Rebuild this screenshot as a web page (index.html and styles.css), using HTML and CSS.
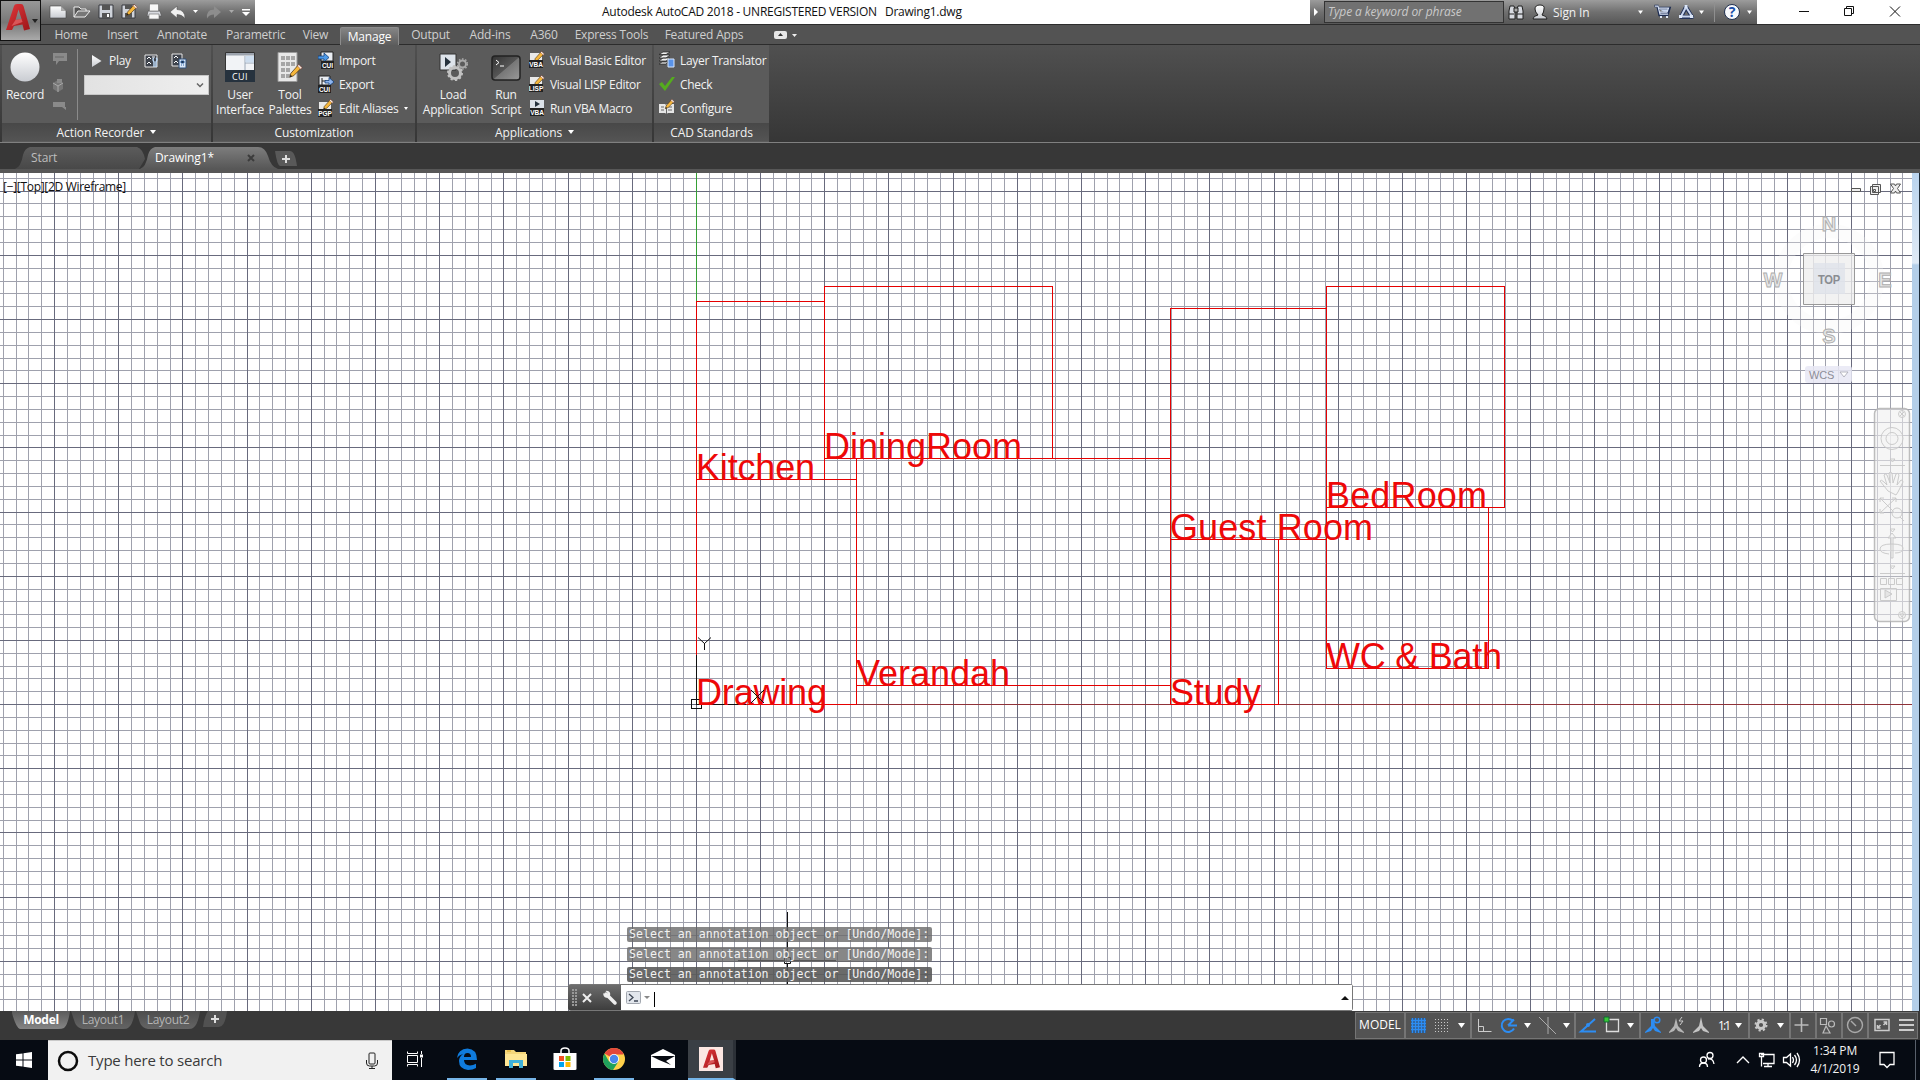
FILE: index.html
```html
<!DOCTYPE html>
<html lang="en">
<head>
<meta charset="utf-8">
<title>Autodesk AutoCAD 2018</title>
<link rel="stylesheet" href="styles.css">
</head>
<body>
<svg class="defs" width="0" height="0">
  <defs>
    <linearGradient id="metal" x1="0" y1="0" x2="0" y2="1"><stop offset="0" stop-color="#fff"/><stop offset="1" stop-color="#c9ccd2"/></linearGradient>
    <linearGradient id="redA" x1="0" y1="0" x2="1" y2="1"><stop offset="0" stop-color="#e2383c"/><stop offset="1" stop-color="#9c1518"/></linearGradient>
    <linearGradient id="screen" x1="0" y1="0" x2="1" y2="1"><stop offset="0" stop-color="#333"/><stop offset=".5" stop-color="#555"/><stop offset=".52" stop-color="#777"/><stop offset="1" stop-color="#999"/></linearGradient>
    <symbol id="logo" viewBox="0 0 24 27"><path fill="url(#redA)" d="M0 26 8 2q.5-2 3-2h4q2 0 2.500 2L24 25l-6 1.500-1.500-6L8 22l-2 4zM9.500 16l6-1-3-9.500z"/><path fill="#f0787a" d="m9.500 16 6-1 1 3-11 4z" opacity=".6"/></symbol>
    <symbol id="pencil" viewBox="0 0 16 16"><path d="m2 14 1-4L11 1l3.500 3L6 12.500z" fill="#f6b73c" stroke="#4a3210" stroke-width=".8"/><path d="m10 2 1.500-1.500L15 4l-1.500 1.500z" fill="#f4efe4" stroke="#8a2c2c" stroke-width=".5"/><path d="m2 14 .7-2.500L4.500 13z" fill="#222"/></symbol>
  </defs>
</svg>

<header class="titlebar">
  <div class="quick">
    <svg width="214" height="24" viewBox="41 0 214 24">
      <path d="M50 6h11l5 5v7H50z" fill="url(#metal)" stroke="#444" stroke-width=".6"/><path d="M61 6v5h5z" fill="#aaa"/>
      <path d="M74 17V7h5l2 2h5v2" fill="#555" stroke="#eee"/><path d="m74 17 4-6h12l-5 6z" fill="#777" stroke="#eee"/>
      <path d="M99 5h14v13H99z" fill="#cfd3da" stroke="#36393f"/><path d="M102 5h8v5h-8zm0 8h8v5h-8z" fill="#555"/><path d="M107 14h2v3h-2z" fill="#fff"/>
      <path d="M122 5h13v13h-13z" fill="#cfd3da" stroke="#36393f"/><path d="M125 5h7v4h-7zm0 8h7v5h-7z" fill="#555"/><use href="#pencil" x="125" y="4" width="13" height="13"/>
      <path d="M148 11h12l1.500 5H147z" fill="#d9dbe0" stroke="#555" stroke-width=".7"/><path d="M149.500 4h9v7h-9zM149 14h10v5h-10z" fill="#f7f7f7" stroke="#777" stroke-width=".7"/>
      <path d="m170 12 7-6v3.500q8 0 8 9-3-4-8-4V18z" fill="#f1f1f1" stroke="#555" stroke-width=".6"/><path d="M193 10h5l-2.500 3z" fill="#fff"/>
      <path d="m221 12-7-6v3.500q-8 0-7 9 2-4 7-4V18z" fill="#8d8d8d"/><path d="M229 10h5l-2.500 3z" fill="#aaa"/>
      <path d="M242 9h8v1.500h-8zm0 3h8l-4 4z" fill="#fff"/>
    </svg>
  </div>
  <div class="caption"><span class="cap-a">Autodesk AutoCAD 2018 - UNREGISTERED VERSION</span><span>Drawing1.dwg</span></div>
  <div class="info">
    <i class="tri-right"></i>
    <span class="keyword">Type a keyword or phrase</span>
    <svg width="46" height="24" viewBox="1504 0 46 24">
      <path d="M1510 6h4l1 4v9h-6v-8zM1518 6h4l1 5v8h-6v-9z" fill="#d7dae0" stroke="#222"/><path d="M1514 8h4v4h-4zM1509 14h5m3 0h6" stroke="#222" fill="#aaa"/>
      <path d="M1533 19q0-3 5-4-3-3-3-6 0-4 5-4t4 4q0 3-2 6 5 1 5 4z" fill="url(#metal)" stroke="#222"/>
    </svg>
    <span class="signin">Sign In</span>
    <svg width="124" height="24" viewBox="1633 0 124 24">
      <path d="M1638 10.500h5l-2.500 3.500z" fill="#fff"/>
      <path d="M1654.500 6h3l2 9h9m-10-7h11l-1.500 5h-8" fill="#c8d6ee" stroke="#1e2d52" stroke-width="2.500"/><path d="M1655 6.200h3l2 8h8m-9-6h9.500l-1.500 4h-7" fill="none" stroke="#dbe5f7" stroke-width="1.200"/><path d="M1660 17h2m4 0h2" stroke="#dfe8f6" stroke-width="2.200"/>
      <path d="m1686 7-5 10h11z" fill="none" stroke="#233258" stroke-width="4" stroke-linejoin="round"/><path d="m1686 7-5 9.500h11z" fill="none" stroke="#c9d6ef" stroke-width="2"/><path d="M1679 15h3v3h-3zm11 0h3v3h-3zM1684.500 5h3v3h-3z" fill="#dde7f8"/>
      <path d="M1699 10.500h5l-2.500 3.500zM1747 10.500h5l-2.500 3.500z" fill="#fff"/><path d="M1714.500 2v20" stroke="#8f8f8f"/>
      <circle cx="1732" cy="12" r="7.500" fill="#f7f9fd" stroke="#20304f"/><text x="1732" y="17" class="help" text-anchor="middle">?</text>
    </svg>
  </div>
  <svg class="winbtns" width="163" height="24" viewBox="1757 0 163 24"><path d="M1799 11.500h10M1844.500 8.500h7v7h-7zM1846.500 8V6.500h7v7h-2M1890 6.500l10 10m0-10-10 10" fill="none" stroke="#111"/></svg>
  <div class="appbtn"><svg width="24" height="27"><use href="#logo" width="24" height="27"/></svg><i class="tri"></i></div>
</header>

<nav class="tabs">
  <span>Home</span><span>Insert</span><span>Annotate</span><span>Parametric</span><span class="view">View</span><span class="on">Manage</span><span>Output</span><span>Add-ins</span><span>A360</span><span>Express Tools</span><span>Featured Apps</span>
  <svg width="30" height="20" viewBox="0 0 30 20"><rect x="3" y="6" width="13" height="8" rx="2" fill="#e6e6e6"/><path d="m7 11 2.500-3 2.500 3z" fill="#333"/><path d="M21 9h5l-2.500 3z" fill="#eee"/></svg>
</nav>

<section class="ribbon">
  <div class="panel recorder">
    <div class="body">
      <div class="big"><svg width="30" height="30"><circle cx="15" cy="15" r="14.500" fill="url(#metal)"/></svg><span>Record</span></div>
      <svg width="26" height="76" viewBox="48 46 26 76" fill="#8a8a8a"><path d="M53 54h14v8h-8l-3 4v-4h-3z"/><path d="M55 58h9" stroke="#666"/><path d="m53 84 5-3 5 3v6l-5 3-5-3z" fill="#777"/><path d="m53 84 5 3 5-3m-5 3v6" stroke="#aaa" fill="none"/><path d="M57 80h5v4h-5z"/><path d="M53 103h12v5H53zm9 5h4v3z"/></svg>
      <i class="vsep"></i>
      <div class="playbox">
        <div class="row"><svg width="32" height="24"><path d="m8 6 9.500 6L8 18z" fill="url(#metal)"/></svg><span class="play">Play</span>
          <svg width="60" height="24" viewBox="139 49 60 24"><path d="M146 55h12v12h-12z" fill="#3e434c" stroke="#e6e6e6"/><path d="m148 59 2-2 2 2m-4 5 2-2 2 2m1-7h3" stroke="#fff" fill="none"/><path d="M155 67v-5q-2-3 0-4m2 9v-5q2-3 0-4" stroke="#bcd8f5" stroke-width="1.500" fill="none"/><path d="M173 54h10v12h-10z" fill="#3e434c" stroke="#e6e6e6"/><path d="m175 58 2-2 2 2m-4 5 2-2 2 2" stroke="#fff" fill="none"/><path d="M180 59h7v9h-7z" fill="#dbe9f8" stroke="#31517b"/><path d="M182 61h3v2h-3zm0 4h1m1 0h1" stroke="#3566a5"/></svg></div>
        <div class="combo"><svg width="12" height="8"><path d="m2 1.500 3 3 3-3" stroke="#666" stroke-width="1.500" fill="none"/></svg></div>
      </div>
    </div>
    <footer>Action Recorder <i class="tri"></i></footer>
  </div>
  <div class="panel custom">
    <div class="body">
      <div class="big w52"><svg width="30" height="30"><path d="M.5.500h29v18H.5z" fill="#f1f3f6" stroke="#333"/><path d="M1 1h28v2.500H1z" fill="#9ba2ac"/><path d="M20 4v14m0-7h9" stroke="#9aa6b5"/><path d="M20.500 4h8.500v6.500h-8.500z" fill="#cdddee"/><path d="M0 18h30v12H0z" fill="#26323e"/><text x="15" y="28" class="cui" text-anchor="middle">CUI</text></svg><span>User<br>Interface</span></div>
      <div class="big w46"><svg width="26" height="30"><path d="M1 .5h19v29H1z" fill="#e8e8e8" stroke="#999"/><path d="M4 4h4v4H4zm5 0h4v4H9zm5 0h4v4h-4zM4 10h4v4H4zm5 0h4v4H9zm5 0h4v4h-4zM4 16h4v4H4zm5 0h4v4H9zM4 22h4v4H4zm5 0h4v4H9z" fill="#a6a6a6"/><use href="#pencil" x="11" y="11" width="15" height="17"/></svg><span>Tool<br>Palettes</span></div>
      <ul>
        <li><svg width="16" height="18"><path d="M3 1h12v9H3z" fill="#e9edf2" stroke="#222"/><path d="M0 5h6V2l5 4.500L6 11V8H0z" fill="#4d9ae8" stroke="#123c75" stroke-width=".8"/><path d="M3 10h13v8H3z" fill="#222"/><text x="9.500" y="17" class="tiny" text-anchor="middle">CUI</text></svg>Import</li>
        <li><svg width="16" height="18"><path d="M1 1h11v9H1z" fill="#e9edf2" stroke="#222"/><path d="M4 3v7m0-4h4" stroke="#222"/><path d="M7 5.500h4v-3L16 7l-5 4V8H7z" fill="#8fb6ef" stroke="#123c75" stroke-width=".8"/><path d="M0 10h13v8H0z" fill="#222"/><text x="6.500" y="17" class="tiny" text-anchor="middle">CUI</text></svg>Export</li>
        <li><svg width="16" height="18"><path d="M1 3h12v8H1z" fill="#e9e9e9"/><use href="#pencil" x="4" y="0" width="12" height="12"/><path d="M0 10h14v8H0z" fill="#222"/><text x="7" y="17" class="tiny" text-anchor="middle">PGP</text></svg>Edit Aliases<i class="tri small"></i></li>
      </ul>
    </div>
    <footer>Customization</footer>
  </div>
  <div class="panel apps">
    <div class="body">
      <div class="big w70"><svg width="30" height="30"><path d="M2 2h16v16H2z" fill="#dde3ea" stroke="#333"/><path d="m7 5 6 5-6 5z" fill="#26323e"/><circle cx="17" cy="21" r="5.500" fill="none" stroke="#c2c2c2" stroke-width="3"/><circle cx="17" cy="21" r="7" fill="none" stroke="#c2c2c2" stroke-width="2" stroke-dasharray="2.200 2.200"/><circle cx="24.500" cy="12" r="3.500" fill="none" stroke="#a9a9a9" stroke-width="2"/><circle cx="24.500" cy="12" r="5" fill="none" stroke="#a9a9a9" stroke-width="1.500" stroke-dasharray="1.600 1.600"/></svg><span>Load<br>Application</span></div>
      <div class="big w36"><svg width="30" height="30"><rect x="1" y="4" width="28" height="24" rx="3" fill="url(#screen)" stroke="#222" stroke-width="1.500"/><path d="m5 8 3 2.500L5 13m4 1h4" stroke="#fff" fill="none"/></svg><span>Run<br>Script</span></div>
      <ul>
        <li><svg width="16" height="18"><path d="M1 2h12v8H1z" fill="#e9e9e9"/><use href="#pencil" x="4" y="0" width="12" height="12"/><path d="M0 9h14v8H0z" fill="#222"/><text x="7" y="16" class="tiny" text-anchor="middle">VBA</text></svg>Visual Basic Editor</li>
        <li><svg width="16" height="18"><path d="M1 2h12v8H1z" fill="#e9e9e9"/><use href="#pencil" x="4" y="0" width="12" height="12"/><path d="M0 9h14v8H0z" fill="#222"/><text x="7" y="16" class="tiny" text-anchor="middle">LISP</text></svg>Visual LISP Editor</li>
        <li><svg width="16" height="18"><path d="M1 1h14v9H1z" fill="#dce2e9"/><path d="m6 2 5 3-5 3z" fill="#26323e"/><path d="M1 9h14v8H1z" fill="#222"/><text x="8" y="16" class="tiny" text-anchor="middle">VBA</text></svg>Run VBA Macro</li>
      </ul>
    </div>
    <footer>Applications <i class="tri"></i></footer>
  </div>
  <div class="panel cad">
    <div class="body">
      <ul>
        <li><svg width="16" height="18"><path d="m0 10 4-3h7l-4 3zm0-3 4-3h7L7 7zm0-3.500L4 1h7L7 3.500zM0 13l3-2h6l-2 2z" fill="#f0f0f0" stroke="#222" stroke-width=".7"/><path d="M9 8h6v8H9z" fill="#5a94ea" stroke="#d9e7fb"/></svg>Layer Translator</li>
        <li><svg width="16" height="18"><path d="m0 9 3-2 3 4 7-9h3L6 16z" fill="#55ab1e"/></svg>Check</li>
        <li><svg width="16" height="18"><path d="M0 5h6l1 1 1-1h7v9H9l-1.500 1L6 14H0z" fill="#e6e6e6"/><path d="M2 8h3m-3 3h3m4-3h4m-4 3h4M7.500 6v9" stroke="#666"/><use href="#pencil" x="5" y="0" width="11" height="11"/></svg>Configure</li>
      </ul>
    </div>
    <footer>CAD Standards</footer>
  </div>
</section>

<div class="filetabs">
  <div class="ftab start"><span>Start</span></div>
  <div class="ftab current"><span>Drawing1*</span><svg width="8" height="8"><path d="m1 1 6 6m0-6L1 7" stroke="#3c3c3c" stroke-width="2"/></svg></div>
  <div class="plus"><svg width="10" height="10"><path d="M5 1v8M1 5h8" stroke="#ddd" stroke-width="2"/></svg></div>
</div>

<main class="viewport">
  <svg class="drawing" width="1912" height="838" viewBox="0 173 1912 838">
    <g shape-rendering="crispEdges" fill="none">
      <path id="minor" class="minor"/>
      <path id="major" class="major"/>
      <path d="M696.500 173v128" stroke="#35a035"/>
      <path d="M856 704.500h1056" stroke="#8f3238"/>
      <g stroke="#e60000">
        <path d="M696.500 301.500h128v178h-128z"/><path d="M824.500 286.500h228v172h-228z"/>
        <path d="M696.500 479.500h160v225h-160z"/><path d="M856.500 458.500h314v227h-314z"/>
        <path d="M1170.500 308.500h156v231h-156z"/><path d="M1326.500 286.500h178v221h-178z"/>
        <path d="M1326.500 507.500h162v161h-162z"/><path d="M1170.500 539.500h108v165h-108z"/>
      </g>
      <path d="M696.500 655v49h49" stroke="#111"/><path d="M691.500 699.500h10v9h-10z" stroke="#111"/>
    </g>
    <g class="room">
      <text x="696" y="480" textLength="119">Kitchen</text><text x="824" y="459" textLength="198">DiningRoom</text>
      <text x="696" y="705" textLength="131">Drawing</text><text x="856" y="686" textLength="154">Verandah</text>
      <text x="1170" y="540" textLength="203">Guest Room</text><text x="1326" y="508" textLength="161">BedRoom</text>
      <text x="1326" y="669" textLength="176">WC &amp; Bath</text><text x="1170" y="705" textLength="91">Study</text>
    </g>
    <path d="m698 637.500 6.500 6 6.500-6M704.500 643v7M751 690l13 13m0-13-13 13" stroke="#111" fill="none"/>
    <path d="M787.500 912v45m0 7v20M738 960.500h46m7 0h45M784.500 957.500h6v6h-6z" stroke="#111" fill="none"/>
    <g fill="#eee" stroke="#555"><path d="M1851.500 188.500h9v3h-9z"/><path d="M1872.500 184.500h8v8h-8zM1870.500 186.500h8v8h-8z"/><path d="M1873.500 189.500h2v2h-2z"/><path d="M1890.500 184h4l1 2 1-2h4l-3 4.500 3 4.500h-4l-1-2-1 2h-4l3-4.500z"/></g>
    <circle cx="1829" cy="279" r="48" fill="none" stroke="#f2f2f4" stroke-width="14" opacity=".25"/>
    <g class="compass" text-anchor="middle"><text x="1829" y="231">N</text><text x="1773" y="287">W</text><text x="1885" y="287">E</text><text x="1829" y="343">S</text></g>
    <path d="M1803.500 253.500h51v51h-51z" fill="#eeeeee" fill-opacity=".78" stroke="#999"/><path d="M1814 263h31v31h-31z" fill="#dfe2ea" fill-opacity=".8"/>
    <text class="top" x="1829" y="284" text-anchor="middle" textLength="22" lengthAdjust="spacingAndGlyphs">TOP</text>
    <rect x="1805" y="366" width="47" height="17" rx="3" fill="#e7e7f4" fill-opacity=".85"/><text class="wcs" x="1809" y="378.500" textLength="25">WCS</text><path d="M1840 372h8l-4 5z" fill="#fff" stroke="#a5a5b0" stroke-width=".8"/>
    <rect x="1874.500" y="408.500" width="35" height="213" rx="5" fill="#eee" fill-opacity=".55" stroke="#aeaeae" stroke-opacity=".8" stroke-width="1.500"/>
    <g fill="#f4f4f4" fill-opacity=".4" stroke="#c6c6c6" stroke-width=".9"><circle cx="1902" cy="414" r="3.500"/><path d="m1900 412 4 4m0-4-4 4"/><circle cx="1892" cy="438.500" r="11"/><circle cx="1892" cy="438.500" r="6"/><path d="M1890 459h5l-2.500 3zM1880 465.500h25m-25 108h25"/><path d="m1888 491-8-10q1-2 4 1l3 3-3-10q1-2 3 0l3 8-1-10q1-2 3 0l1 10 3-9q2-2 3 1l-2 10 4-5q2 0 2 2l-5 10-2 3z"/><path d="m1880 498 15 15m1-15-16 15m0-11v-4h4m8 0h4v4m-16 7v4h4"/><circle cx="1897" cy="513" r="5"/><path d="m1900 517 4 4M1890 529h5l-2.500 3zM1891 558v-20h-3l4-5 4 5h-3v20zM1880 549q0-5 12-5t11 5q-1 4-8 4m-6 1q-9-1-9-5M1890 566h5l-2.500 3zM1880.500 578.500h6v6h-6zm8 0h6v6h-6zm8 0h6v6h-6zM1880.500 588.500h16v12h-16z"/><path d="m1885 590 7 4-7 4z" fill="#ccc"/><circle cx="1902" cy="615" r="3.500"/><path d="M1900 614h4l-2 3z"/></g>
  </svg>
  <div class="edge"></div>
  <span class="viewlabel">[−][Top][2D Wireframe]</span>
  <div class="history"><span>Select an annotation object or [Undo/Mode]:</span><span>Select an annotation object or [Undo/Mode]:</span><span>Select an annotation object or [Undo/Mode]:</span></div>
  <div class="command">
    <svg width="53" height="26" viewBox="0 0 53 26"><path d="M5 4v18M8 4v18" stroke="#999" stroke-width="2" stroke-dasharray="2 1"/><path d="m15 9 8 8m0-8-8 8" stroke="#eee" stroke-width="2"/><path d="m38 9 9 9" stroke="#eee" stroke-width="3.500" stroke-linecap="round"/><path d="M37.500 6a3.500 3.500 0 1 1-2 2l3 2 1.500-1.500z" fill="#eee"/></svg>
    <div class="prompt"><svg width="38" height="26" viewBox="0 0 38 26"><rect x="5.500" y="6.500" width="14" height="12" rx="1" fill="#e2e6ec" stroke="#a3a8b0"/><path d="m8 9 4 3.500L8 16m5 0h4" stroke="#3e4654" stroke-width="1.300" fill="none"/><path d="M23 11h6l-3 3z" fill="#888"/><path d="M33.500 7v15" stroke="#000"/></svg><i class="up"></i></div>
  </div>
</main>

<div class="statusbar">
  <div class="layouts"><span class="model">Model</span><span>Layout1</span><span>Layout2</span><span class="add"><svg width="8" height="8"><path d="M4 0v8M0 4h8" stroke="#ddd" stroke-width="2"/></svg></span></div>
  <div class="toggles">
    <span class="cell w50">MODEL</span>
    <span class="cell w66"><svg width="66" height="27" viewBox="1405 0 66 27"><path d="M1411 6h15v15h-15z" fill="#155aa8" opacity=".5"/><path d="M1412.500 6v15m3-15v15m3-15v15m3-15v15m3-15v15M1411 8.500h15m-15 3h15m-15 3h15m-15 3h15" stroke="#2c8cf2" stroke-width="1.300"/><path d="M1435 7.500h14m-14 3h14m-14 3h14m-14 3h14m-14 3h14" stroke="#c9c9c9" stroke-dasharray="1 2"/><path d="M1458 11h7l-3.500 5z" fill="#fff"/></svg></span>
    <span class="cell w104"><svg width="104" height="27" viewBox="1471 0 104 27" fill="none" stroke="#ccc"><path d="M1478.500 7v12.500h13M1479 14.500h4.500v5"/><path d="M1513 9a6.500 6.500 0 1 0 1 7.500M1508 13.500h9M1508 13.500l6-6" stroke="#2d8df3" stroke-width="2"/><path d="M1524 11h7l-3.500 5zM1563 11h7l-3.500 5z" fill="#fff" stroke="none"/><path d="m1539 5 17 17m-8-17v17" stroke="#aaa"/></svg></span>
    <span class="cell w65"><svg width="65" height="27" viewBox="1575 0 65 27" fill="none"><path d="M1595 7l-14 12.500h15" stroke="#2d8df3" stroke-width="2"/><circle cx="1588" cy="13" r="2" fill="#2d8df3"/><path d="M1606.500 7.500h12v12h-12z" stroke="#ddd" stroke-width="1.300"/><path d="M1604 5h5v5h-5z" fill="#37c837" stroke="#163"/><path d="M1627 11h7l-3.500 5z" fill="#fff"/></svg></span>
    <span class="cell w109"><svg width="109" height="27" viewBox="1640 0 109 27"><path d="m1651 7 3 0 1 7 6 6v1l-6-2-2-3-2 3-6 2v-1l6-6z" fill="#2d8df3"/><circle cx="1657" cy="8" r="2.800" fill="#555" stroke="#2d8df3" stroke-width="1.500"/><path d="m1676 6 2 8 6 6v1l-6-2-2-3-2 3-5 2v-1l5-6z" fill="#b5b5b5"/><path d="m1682 5-3 4h4l-3 4" stroke="#ccc" fill="none"/><path d="m1701 5 2 9 6 6v1l-6-2-2-3-2 3-6 2v-1l6-6z" fill="#c4c4c4"/><text x="1718" y="17.500" class="scale" textLength="13">1:1</text><path d="M1735 11h7l-3.500 5z" fill="#fff"/></svg></span>
    <span class="cell w41"><svg width="41" height="27" viewBox="1749 0 41 27"><circle cx="1761" cy="13" r="3.600" fill="none" stroke="#c8c8c8" stroke-width="3"/><circle cx="1761" cy="13" r="5.500" fill="none" stroke="#c8c8c8" stroke-width="2" stroke-dasharray="2.200 2.120"/><path d="M1777 11h7l-3.500 5z" fill="#fff"/></svg></span>
    <span class="cell w26"><svg width="26" height="27"><path d="M11.500 6v14M4.500 13h14" stroke="#bbb" stroke-width="1.600"/></svg></span>
    <span class="cell w26"><svg width="26" height="27" fill="none" stroke="#bbb" stroke-width="1.200"><path d="M4.500 6.500h6v6h-6zM10 14l4 7H7z"/><circle cx="15.500" cy="12" r="3"/></svg></span>
    <span class="cell w26"><svg width="26" height="27" fill="none" stroke="#aaa" stroke-width="1.400"><circle cx="13" cy="13" r="7.500"/><path d="m9 9 5 5"/></svg></span>
    <span class="cell w50"><svg width="50" height="27" fill="none" stroke="#ccc" stroke-width="1.500"><path d="M7 7.500h14v11H7z"/><path d="m9.500 16 3-3m-3 0v3h3m6-6-3 3m0-3h3v3"/><path d="M31 8h15m-15 5h15m-15 5h15" stroke-width="2"/></svg></span>
  </div>
</div>

<footer class="taskbar">
  <div class="startbtn"><svg width="16" height="16"><path d="M0 2.300 6.500 1.400V7.500H0zM7.500 1.200 16 0v7.500H7.500zM0 8.500h6.500v6.100L0 13.700zM7.500 8.500H16V16l-8.500-1.200z" fill="#fff"/></svg></div>
  <div class="search"><svg width="22" height="22"><circle cx="11" cy="11" r="9" fill="none" stroke="#0b0b0b" stroke-width="2.500"/></svg><span>Type here to search</span><svg width="14" height="18" fill="none" stroke="#222"><rect x="4" y="1" width="6" height="11" rx="1"/><path d="M1.500 8v3q0 3 3 3h5q3 0 3-3V8M7 14v2.500M4 16.500h6"/></svg></div>
  <div class="pins">
    <div class="pin w47"><svg width="18" height="18" fill="none" stroke="#fff"><path d="M1.500 5.500h10v7h-10zM1.500 1.500v2h10v-2M1.500 16.500v-2h10v2M15.500 1v3m0 4v9"/><path d="M14 4.500h3v3h-3z" fill="#fff" stroke="none"/></svg></div>
    <div class="pin open"><svg width="22" height="22"><path d="M1 10Q2 1 11.500.500 21 1 21 12H8q0 5 6 5.500 3 0 6-1.800V20q-3 2-8 2-9-1-9-9 0-4 4-7-4 1-6 4zm7-1h7q0-4-3.500-4T8 9z" fill="#0f7bdc"/></svg></div>
    <div class="pin open"><svg width="22" height="20"><path d="M0 1h9l2 2h10v14H0z" fill="#f5d67a"/><path d="M0 5h22v12H0z" fill="#ffe694"/><path d="M4 11h14v8h-4v-5H8v5H4z" fill="#3fb0d9"/><path d="M2 2h4" stroke="#e2ac22"/></svg></div>
    <div class="pin"><svg width="24" height="24"><path d="M8 6V4q0-3 4-3t4 3v2" fill="none" stroke="#fff" stroke-width="1.500"/><path d="M.5 6h23v16q0 1-1.500 1H2q-1.500 0-1.500-1z" fill="#fff"/><path d="M6 9h5v5H6z" fill="#f25022"/><path d="M12.500 9h5v5h-5z" fill="#7fba00"/><path d="M6 15h5v5H6z" fill="#00a4ef"/><path d="M12.500 15h5v5h-5z" fill="#ffb900"/></svg></div>
    <div class="pin open"><svg width="22" height="22"><circle cx="11" cy="11" r="11" fill="#ffd04a"/><path d="M11 11 1.500 5.500A11 11 0 0 1 20.500 5.500L20 6.500H11z" fill="#e2473b"/><path d="M1.500 5.500A11 11 0 0 0 10 22l5.500-8.500H6z" fill="#1fa15c"/><circle cx="11" cy="11" r="5" fill="#fff"/><circle cx="11" cy="11" r="4.200" fill="#4a86ee"/></svg></div>
    <div class="pin"><svg width="24" height="20"><path d="M0 6 12 0l12 6v13H0z" fill="#fff"/><path d="m0 7 24 0-9 5 5 4L8 11z" fill="#070b12"/></svg></div>
    <div class="pin open active"><svg width="24" height="24"><path d="M0 0h24v24H0z" fill="#fbe7e3"/><use href="#logo" x="4" y="2" width="17" height="20"/></svg></div>
  </div>
  <svg class="tray" width="120" height="40" viewBox="1690 0 120 40" fill="none" stroke="#fff" stroke-width="1.300"><circle cx="1710" cy="15.500" r="3"/><circle cx="1703.500" cy="20" r="3"/><path d="M1699.500 27q0-4 4-4t4 4M1708 19q5-1 6 5M1737 23l6-6 6 6M1761 14.500h13v9h-11m5 0v3m-4 0h8M1759.500 13.500h4v3h-4zM1761.500 17v9.500"/><path d="M1783.500 17.500h3l4-3.500v12l-4-3.500h-3zM1792.500 17q2 3 0 6m2-8q4 5 0 10m2.500-12q5 7 0 14"/></svg>
  <div class="clock"><span>1:34 PM</span><span>4/1/2019</span></div>
  <svg class="note" width="16" height="18"><path d="M1 1.500h14v12h-4l-3 3-3-3H1z" fill="none" stroke="#fff" stroke-width="1.300"/></svg>
  <i class="desk"></i>
</footer>
<script src="grid.js"></script>
</body>
</html>
```
FILE: styles.css
```css
* { box-sizing: border-box; }
body { margin: 0; width: 1920px; height: 1080px; overflow: hidden; display: flex; flex-direction: column; font: 12px/15px "Open Sans", "Noto Sans", sans-serif; font-stretch: 88%; letter-spacing: -0.3px; color: #f2f2f2; background: #383838; white-space: nowrap; }
svg { display: block; flex: none; }
.defs { position: absolute; }
i { display: block; flex: none; }
.tri { width: 0; height: 0; border: 3.500px solid transparent; border-top: 4px solid #fff; border-bottom: 0; }
.tri.small { border-width: 3px 2.500px 0; margin-left: 1px; }

.titlebar { position: relative; height: 24px; flex: none; display: flex; background: #fff; padding-left: 41px; }
.quick { width: 214px; background: linear-gradient(#9c9c9c, #6f6f6f 50%, #575757); }
.caption { width: 1055px; padding-left: 347px; display: flex; gap: 9px; line-height: 24px; color: #111; letter-spacing: -.25px; }
.cap-a { width: 274px; }
.info { width: 447px; display: flex; align-items: center; background: linear-gradient(#9c9c9c, #707070 50%, #575757); }
.tri-right { width: 0; border: 4px solid transparent; border-left: 4px solid #fff; border-right: 0; margin: 0 6px 0 4px; }
.keyword { width: 180px; height: 22px; line-height: 20px; padding-left: 3px; font-style: italic; letter-spacing: -.1px; color: #c9c9c9; background: #717171; border: 1px solid #333; }
.signin { width: 83px; padding-left: 3px; line-height: 24px; padding-top: 1px; letter-spacing: -.1px; }
.help { font: bold 14px "Open Sans", sans-serif; fill: #1c4ea8; }
.appbtn { position: absolute; left: 0; top: 0; width: 41px; height: 41px; z-index: 3; display: flex; gap: 2px; padding: 3px 0 0 5px; border: 1px solid #111; background: linear-gradient(#989898, #777 55%, #aaa); }
.appbtn .tri { margin-top: 15px; border-top-color: #222; }

.tabs { height: 21px; flex: none; display: grid; grid-template-columns: 72px 31px 88px 57px 57px 59px 63px 56px 52px 83px 102px 50px; padding-left: 35px; border-top: 1px solid #2c2c2c; border-bottom: 1px solid #2c2c2c; background: #535353; color: #cfcfcf; text-align: center; line-height: 20px; letter-spacing: -.2px; }
.tabs .view { padding-left: 8px; }
.tabs .on { margin-top: 2px; line-height: 17px; color: #fff; border: 1px solid #8d8d8d; border-bottom: 0; border-radius: 2px 2px 0 0; background: linear-gradient(#858585, #5d5d5d); }
.tabs svg { margin-left: 16px; }

.ribbon { height: 98px; flex: none; display: flex; gap: 2px; padding-left: 2px; border-bottom: 1px solid #808080; background: linear-gradient(#505050, #363636); }
.panel { display: flex; flex-direction: column; background: #5b5b5b; }
.panel .body { height: 78px; display: flex; }
.panel footer { height: 18px; display: flex; align-items: center; justify-content: center; gap: 6px; background: linear-gradient(#484848, #545454); letter-spacing: -.1px; }
.recorder { width: 209px; } .custom { width: 202px; } .apps { width: 235px; } .cad { width: 115px; }
.big { width: 46px; display: flex; flex-direction: column; align-items: center; padding-top: 7px; text-align: center; }
.big span { margin-top: 5px; letter-spacing: -.2px; }
.w52 { width: 54px; } .w46 { width: 46px; } .w70 { width: 72px; } .w36 { width: 34px; }
.vsep { width: 1px; margin: 4px 6px 3px 3px; background: #8b8b8b; }
.row { display: flex; height: 30px; padding-top: 4px; align-items: flex-start; }
.row .play { line-height: 24px; width: 30px; margin-left: -7px; }
.row svg:last-child { margin-left: -1px; }
.combo { width: 125px; height: 20px; display: flex; justify-content: flex-end; padding: 6px 1px 0 0; background: linear-gradient(90deg, #e2e2e2, #efefef); border: 1px solid #c7c7c7; }
.panel ul { list-style: none; margin: 0; padding: 3px 0 0 5px; }
.panel li { height: 24px; display: flex; align-items: center; gap: 5px; }
.cui { font: 9px "Open Sans", sans-serif; fill: #fff; letter-spacing: .5px; }
.tiny { font: bold 6.500px "Liberation Sans", sans-serif; fill: #fff; letter-spacing: 0; }
.apps ul { padding-left: 6px; }

.filetabs { height: 30px; flex: none; display: flex; align-items: flex-end; padding: 4px 0 0 15px; border-bottom: 4px solid #575757; background: #373737; line-height: 22px; letter-spacing: -.1px; }
.ftab { height: 22px; display: flex; align-items: center; background: linear-gradient(#5c5c5c, #484848); color: #bdbdbd; }
.start { width: 130px; padding-left: 16px; clip-path: path("M0 22Q6 20 8 8Q10 1 15 0H122Q128 2 130 12L124 22Z"); }
.current { width: 138px; margin-left: -5px; padding-left: 15px; justify-content: space-between; padding-right: 23px; background: linear-gradient(#7d7d7d, #575757); color: #fff; clip-path: path("M0 22Q6 20 8 8Q10 1 15 0H118Q125 0 128 9Q131 20 138 22Z"); }
.plus { width: 22px; height: 15px; margin: 0 0 3px -3px; display: flex; align-items: center; justify-content: center; background: #595959; clip-path: path("M0 0H15Q20 0 22 15H5Q2 14 0 0Z"); }

.viewport { position: relative; height: 838px; flex: none; display: flex; background: #fff; }
.minor { stroke: #9fa1ad; }
.major { stroke: #686a7d; }
.room { font: 36px "Liberation Sans", Arial, sans-serif; fill: #ee0808; letter-spacing: 0; }
.compass { font: bold 20px "Liberation Sans", sans-serif; fill: #e6e6e6; stroke: #adadad; stroke-width: .9px; letter-spacing: 0; }
.top { font: bold 13px "Liberation Sans", sans-serif; fill: #8a8d92; }
.wcs { font: 11px "Liberation Sans", sans-serif; fill: #8d8d98; }
.edge { width: 7px; margin-right: 1px; background: linear-gradient(#b9d3ed, #dfeaf6 90px, #b4cfe9 92px); box-shadow: 1px 0 #1c2b38; }
.viewlabel { position: absolute; left: 3px; top: 6px; color: #111; }
.history { position: absolute; left: 627px; top: 754px; display: flex; flex-direction: column; gap: 5px; font: 11.600px/15px "DejaVu Sans Mono", monospace; letter-spacing: 0; }
.history span { width: 305px; height: 15px; padding-left: 2px; border-radius: 2px; background: rgba(105, 105, 105, .8); }
.history span:last-child { background: rgba(85, 85, 85, .88); }
.command { position: absolute; left: 568px; top: 811px; width: 785px; height: 27px; display: flex; border: 1px solid #777; border-left: 0; border-radius: 3px; background: linear-gradient(#6d6d6d, #3d3d3d); }
.prompt { flex: 1; display: flex; justify-content: space-between; align-items: center; background: #fff; padding-right: 3px; }
.up { border: 4px solid transparent; border-bottom-color: #111; border-top: 0; }

.statusbar { height: 29px; flex: none; display: flex; justify-content: space-between; align-items: flex-start; background: #383838; padding-right: 2px; }
.layouts { display: flex; padding-left: 12px; line-height: 17px; color: #b5b5b5; text-align: center; }
.layouts span { width: 64px; height: 18px; margin-right: 1px; background: linear-gradient(#4d4d4d, #646464); clip-path: path("M0 0H64Q62 14 57 17Q56 18 52 18H12Q6 17 4 12Z"); }
.layouts .model { width: 58px; color: #fff; font-weight: bold; background: linear-gradient(#5a5a5a, #858585); clip-path: path("M-4 0H58Q56 14 52 17Q50 18 46 18H8Q4 17 0 2Z"); }
.layouts .add { width: 24px; height: 16px; margin-left: 2px; display: flex; align-items: center; justify-content: center; background: #515151; clip-path: path("M5 0H24Q22 16 16 16H0Q1 6 5 0Z"); }
.toggles { display: flex; height: 29px; padding: 1px 0; background: #3c3c3c; color: #fff; letter-spacing: 0; }
.cell { height: 27px; line-height: 25px; text-align: center; box-shadow: inset 0 0 0 1px #757575; background: #535353; }
.w50 { width: 50px; } .w66 { width: 66px; } .w104 { width: 104px; } .w65 { width: 65px; } .w109 { width: 109px; } .w41 { width: 41px; } .w26 { width: 26px; }
.scale { font: 12px "Open Sans", sans-serif; fill: #fff; }

.taskbar { height: 40px; flex: none; display: flex; align-items: center; background: #060b13; letter-spacing: -.1px; }
.startbtn { width: 48px; display: flex; justify-content: center; }
.search { width: 344px; height: 40px; display: flex; align-items: center; padding: 0 13px 0 9px; background: #f1f1f1; border-top: 1px solid #c9c9c9; color: #3a3a3a; font-size: 15px; letter-spacing: -.2px; }
.search span { flex: 1; padding-left: 9px; }
.pins { display: flex; height: 40px; gap: 9px; }
.pin { width: 40px; display: flex; align-items: center; justify-content: center; border-bottom: 2px solid transparent; }
.pin.w47 { width: 46px; }
.pin.open { border-bottom-color: #76b5e8; }
.pin.active { width: 48px; margin-left: -4px; background: #3a3f45; border-right: 3px solid #2b3037; }
.tray { margin-left: 954px; }
.clock { width: 50px; display: flex; flex-direction: column; text-align: center; line-height: 18px; }
.note { margin-left: 19px; }
.desk { width: 1px; height: 40px; margin-left: 20px; background: #58606b; }
```
FILE: grid.js
```js
// Draws the model-space grid: a major line on every fifth step from the origin.
(function () {
  var step = 64.18 / 5, minor = '', major = '';
  for (var k = -56; k < 97; k++) {
    var x = Math.floor(696.4 + k * step) + 0.5;
    var v = 'M' + x + ' 173V1011';
    if (k % 5 === 0) major += v; else minor += v;
  }
  for (k = -42; k < 25; k++) {
    var y = Math.floor(704.6 + k * step) + 0.5;
    var h = 'M0 ' + y + 'H1912';
    if (k % 5 === 0) major += h; else minor += h;
  }
  document.getElementById('minor').setAttribute('d', minor);
  document.getElementById('major').setAttribute('d', major);
})();
```
